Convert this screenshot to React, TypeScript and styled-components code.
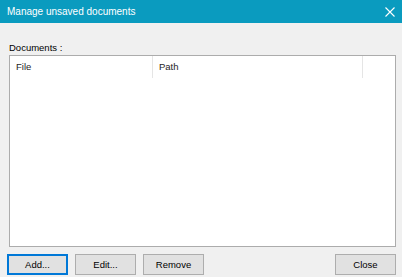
import React from 'react';
import styled, { createGlobalStyle } from 'styled-components';

const GlobalStyle = createGlobalStyle`
    html, body {
        margin: 0;
        padding: 0;
        background: #f0f0f0;
    }
    body {
        font-family: "Liberation Sans", Arial, sans-serif;
        font-size: 10px;
    }
`

const Window = styled.div`
    width: 402px;
    height: 277px;
    display: flex;
    flex-direction: column;
    background: #f0f0f0;
    overflow: hidden;
`

const TitleBar = styled.div`
    height: 23px;
    flex: none;
    display: flex;
    align-items: center;
    justify-content: space-between;
    padding: 0 7px 0 7px;
    background-color: #0a9bbf;
    color: #fff;
    font-size: 10px;
`

const CloseIcon = styled.svg`
    width: 10px;
    height: 10px;
`

const Body = styled.div`
    flex: 1;
    display: flex;
    flex-direction: column;
    padding: 17px 6px 4px 9px;
`

const Label = styled.div`
    font-size: 9.5px;
    color: #000;
    height: 15px;
    line-height: 15px;
`

const ListView = styled.div`
    height: 190px;
    border: 1px solid #acacac;
    background: #fff;
    display: flex;
    flex-direction: column;
`

const HeaderRow = styled.div`
    display: flex;
    height: 22px;
`

const HeaderCell = styled.div<{ $width: number }>`
    width: ${p => p.$width}px;
    flex: none;
    padding-left: 6px;
    font-size: 9.5px;
    color: #1e1e1e;
    line-height: 22px;
    border-right: 1px solid #e5e5e5;
    box-sizing: border-box;
`

const ButtonRow = styled.div`
    display: flex;
    gap: 7px;
    margin-top: 7px;
    margin-left: -2px;
`

const Button = styled.button<{ $default?: boolean }>`
    width: 61px;
    height: 21px;
    padding: 0;
    font-family: "Liberation Sans", Arial, sans-serif;
    font-size: 9.5px;
    color: #000;
    background: #e1e1e1;
    border: 1px solid ${p => p.$default ? '#0078d7' : '#adadad'};
    box-shadow: ${p => p.$default ? 'inset 0 0 0 1px #0078d7' : 'none'};
    box-sizing: border-box;
`

const Spacer = styled.div`
    flex: 1;
`

export default function App() {
    return (
        <>
            <GlobalStyle />
            <Window>
                <TitleBar>
                    <span>Manage unsaved documents</span>
                    <CloseIcon viewBox="0 0 10 10">
                        <path d="M0.5 0.5 L9.5 9.5 M9.5 0.5 L0.5 9.5" stroke="#fff" strokeWidth="1.1" fill="none" />
                    </CloseIcon>
                </TitleBar>
                <Body>
                    <Label>Documents :</Label>
                    <ListView>
                        <HeaderRow>
                            <HeaderCell $width={143}>File</HeaderCell>
                            <HeaderCell $width={210}>Path</HeaderCell>
                        </HeaderRow>
                    </ListView>
                    <ButtonRow>
                        <Button $default>Add...</Button>
                        <Button>Edit...</Button>
                        <Button>Remove</Button>
                        <Spacer />
                        <Button>Close</Button>
                    </ButtonRow>
                </Body>
            </Window>
        </>
    );
}
